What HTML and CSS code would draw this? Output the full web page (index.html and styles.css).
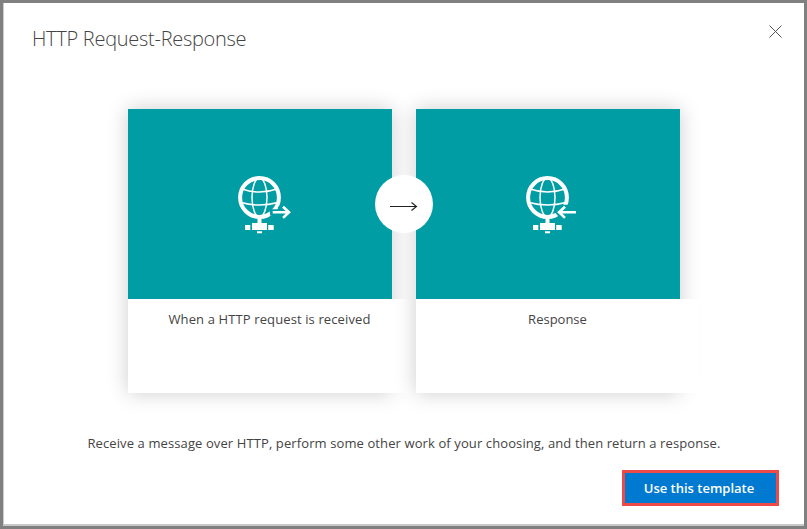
FILE: index.html
```html
<!DOCTYPE html>
<html lang="en">
<head>
<meta charset="utf-8">
<title>HTTP Request-Response</title>
<link rel="stylesheet" href="styles.css">
</head>
<body>
<main class="dialog">
  <header class="header">
    <h1 class="title">HTTP Request-Response</h1>
    <svg class="close" viewBox="0 0 13 13" role="button" aria-label="Close"><path d="M.5 .5 12.5 12.5M12.5 .5 .5 12.5"/></svg>
  </header>
  <section class="cards">
    <article class="card">
      <div class="tile">
        <svg class="icon" viewBox="0 0 56 60">
          <g class="line">
            <circle cx="21.5" cy="22.5" r="19.4" stroke-width="4"/>
            <ellipse cx="21.5" cy="22.5" rx="7.5" ry="19.5"/>
            <path d="M4 14Q21.5 20 39 14M3 27.5Q21.5 32.5 40 27.5"/>
          </g>
          <path class="mask" d="M32 34.2h8V32l3-3h5l8 8-8 9h-5l-3-5.5h-8z"/>
          <path class="arrow" d="M34.7 37.3h17M45 31.7l6 5.6-6 5.6"/>
          <path class="solid" d="M19.5 43h4v5h5.5v7h-15v-7h5.5zM7 50h5.3v5H7zM30.2 50h5.5v5h-5.5zM19 56.3h5v2h-5z"/>
        </svg>
      </div>
      <div class="label request">When a HTTP request is received</div>
    </article>
    <article class="card">
      <div class="tile">
        <svg class="icon" viewBox="0 0 56 60">
          <g class="line">
            <circle cx="21.5" cy="22.5" r="19.4" stroke-width="4"/>
            <ellipse cx="21.5" cy="22.5" rx="7.5" ry="19.5"/>
            <path d="M4 14Q21.5 20 39 14M3 27.5Q21.5 32.5 40 27.5"/>
          </g>
          <path class="mask" d="M28.8 37.3l7.5-7.5h6v4.4H51v6.3h-8.7V46h-6z"/>
          <path class="arrow" d="M50 37.3H33M39 31.7l-6 5.6 6 5.6"/>
          <path class="solid" d="M19.5 43h4v5h5.5v7h-15v-7h5.5zM7 50h5.3v5H7zM30.2 50h5.5v5h-5.5zM19 56.3h5v2h-5z"/>
        </svg>
      </div>
      <div class="label">Response</div>
    </article>
    <div class="connector"><svg viewBox="0 0 58 58"><path d="M15 31.5h27M36.5 27.5l5 4-5 4"/></svg></div>
  </section>
  <p class="description">Receive a message over HTTP, perform some other work of your choosing, and then return a response.</p>
  <footer class="footer"><button class="primary">Use this template</button></footer>
</main>
</body>
</html>
```
FILE: styles.css
```css
* { box-sizing: border-box; }
body {
  margin: 0;
  height: 529px;
  padding: 3px;
  overflow: hidden;
  background: #808080;
  color: #444;
  font: 13px/20px "Open Sans", "Noto Sans", sans-serif;
}
.dialog {
  height: 523px;
  display: flex;
  flex-direction: column;
  background: #fff;
  border-left: 1px solid #ccc;
  border-bottom: 2px solid #c8c8c8;
}
.header {
  height: 106px;
  padding: 22px 22px 0 28px;
  display: flex;
  justify-content: space-between;
}
.title { margin: 0; font-size: 20px; line-height: 28px; font-weight: 300; letter-spacing: -.28px; white-space: nowrap; }
.close { width: 13px; height: 13px; fill: none; stroke: #555; stroke-width: 1; }
.cards { position: relative; display: flex; gap: 24px; margin-left: 124px; height: 284px; }
.card { width: 264px; height: 284px; box-shadow: 0 0 20px rgba(0, 0, 0, .2); }
.tile { height: 190px; padding: 66px 0 0 110px; background: #009da5; }
.icon { display: block; width: 56px; height: 60px; }
.line { fill: none; stroke: #fff; stroke-width: 1.5; }
.arrow { fill: none; stroke: #fff; stroke-width: 2.6; }
.mask { fill: #009da5; }
.solid { fill: #fff; }
.label { width: 283px; height: 94px; padding-top: 10px; background: #fff; text-align: center; }
.request { letter-spacing: .12px; }
.connector { position: absolute; left: 247px; top: 66px; width: 58px; height: 58px; border-radius: 50%; background: #fff; }
.connector svg { display: block; fill: none; stroke: #222; stroke-width: 1.1; }
.description { margin: 40px 0 0; text-align: center; white-space: nowrap; letter-spacing: .105px; }
.footer { display: flex; justify-content: flex-end; padding: 17px 25px 0 0; }
.primary {
  width: 157px;
  height: 36px;
  padding: 0 3px 0 0;
  border: 3px solid #ee4b48;
  background: #007ad1;
  color: #fff;
  font: 600 13px/28px "Open Sans", "Noto Sans", sans-serif;
}
```
